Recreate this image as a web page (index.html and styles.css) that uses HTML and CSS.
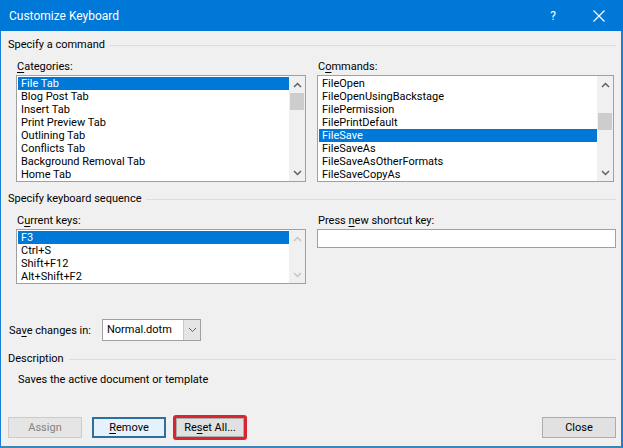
FILE: index.html
```html
<!DOCTYPE html>
<html>
<head>
<meta charset="utf-8">
<link rel="stylesheet" href="styles.css">
</head>
<body>
<div class="window">
  <div class="titlebar">
    <span class="title">Customize Keyboard</span>
    <span class="tb-help">?</span>
    <span class="tb-close">
      <svg width="12" height="12" viewBox="0 0 12 12"><path d="M0.5 0.5L11.5 11.5M11.5 0.5L0.5 11.5" stroke="#fff" stroke-width="1.2" fill="none"/></svg>
    </span>
  </div>
  <div class="content">
    <div class="group-head g1"><span>Specify a command</span></div>
    <div class="two-col">
      <div class="col col-left">
        <div class="label"><u>C</u>ategories:</div>
        <div class="listbox lb-tall">
          <div class="items">
            <div class="item sel">File Tab</div>
            <div class="item">Blog Post Tab</div>
            <div class="item">Insert Tab</div>
            <div class="item">Print Preview Tab</div>
            <div class="item">Outlining Tab</div>
            <div class="item">Conflicts Tab</div>
            <div class="item">Background Removal Tab</div>
            <div class="item">Home Tab</div>
          </div>
          <div class="scrollbar">
            <div class="arrow up"><svg width="9" height="6" viewBox="0 0 9 6"><path d="M1 5L4.5 1.5L8 5" stroke="#606060" stroke-width="1.5" fill="none"/></svg></div>
            <div class="track"><div class="thumb thumb-cat"></div></div>
            <div class="arrow down"><svg width="9" height="6" viewBox="0 0 9 6"><path d="M1 1L4.5 4.5L8 1" stroke="#606060" stroke-width="1.5" fill="none"/></svg></div>
          </div>
        </div>
      </div>
      <div class="col col-right">
        <div class="label">C<u>o</u>mmands:</div>
        <div class="listbox lb-tall">
          <div class="items">
            <div class="item">FileOpen</div>
            <div class="item">FileOpenUsingBackstage</div>
            <div class="item">FilePermission</div>
            <div class="item">FilePrintDefault</div>
            <div class="item sel">FileSave</div>
            <div class="item">FileSaveAs</div>
            <div class="item">FileSaveAsOtherFormats</div>
            <div class="item">FileSaveCopyAs</div>
          </div>
          <div class="scrollbar">
            <div class="arrow up"><svg width="9" height="6" viewBox="0 0 9 6"><path d="M1 5L4.5 1.5L8 5" stroke="#606060" stroke-width="1.5" fill="none"/></svg></div>
            <div class="track"><div class="thumb thumb-cmd"></div></div>
            <div class="arrow down"><svg width="9" height="6" viewBox="0 0 9 6"><path d="M1 1L4.5 4.5L8 1" stroke="#606060" stroke-width="1.5" fill="none"/></svg></div>
          </div>
        </div>
      </div>
    </div>

    <div class="group-head g2"><span>Specify keyboard sequence</span></div>
    <div class="two-col">
      <div class="col col-left">
        <div class="label">C<u>u</u>rrent keys:</div>
        <div class="listbox lb-short">
          <div class="items">
            <div class="item sel">F3</div>
            <div class="item">Ctrl+S</div>
            <div class="item">Shift+F12</div>
            <div class="item">Alt+Shift+F2</div>
          </div>
          <div class="scrollbar">
            <div class="arrow up"><svg width="9" height="6" viewBox="0 0 9 6"><path d="M1 5L4.5 1.5L8 5" stroke="#c5c5c5" stroke-width="1.5" fill="none"/></svg></div>
            <div class="track"></div>
            <div class="arrow down"><svg width="9" height="6" viewBox="0 0 9 6"><path d="M1 1L4.5 4.5L8 1" stroke="#c5c5c5" stroke-width="1.5" fill="none"/></svg></div>
          </div>
        </div>
      </div>
      <div class="col col-right2">
        <div class="label">Press <u>n</u>ew shortcut key:</div>
        <div class="textbox"></div>
      </div>
    </div>

    <div class="save-row">
      <span class="save-label">Sa<u>v</u>e changes in:</span>
      <div class="combo">
        <span class="combo-text">Normal.dotm</span>
        <span class="combo-btn"><svg width="9" height="6" viewBox="0 0 9 6"><path d="M1 1L4.5 4.5L8 1" stroke="#606060" stroke-width="1" fill="none"/></svg></span>
      </div>
    </div>

    <div class="group-head g3"><span>Description</span></div>
    <div class="desc">Saves the active document or template</div>

    <div class="buttons">
      <div class="btn disabled">Assign</div>
      <div class="btn focused"><u>R</u>emove</div>
      <div class="highlight"><div class="btn inner">Re<u>s</u>et All...</div></div>
      <div class="spacer"></div>
      <div class="btn">Close</div>
    </div>
  </div>
</div>
</body>
</html>
```

FILE: styles.css
```css
* { box-sizing: border-box; }
html, body { margin: 0; padding: 0; }
body {
  width: 623px;
  height: 448px;
  overflow: hidden;
  font-family: Roboto, "Noto Sans", sans-serif;
  font-size: 11px;
  color: #000;
  background: #f0f0f0;
}
u { text-decoration: underline; text-underline-offset: 2px; }
.window {
  width: 623px;
  height: 448px;
  border-left: 1px solid #1a7fd4;
  border-right: 2px solid #1a7fd4;
  border-bottom: 2px solid #3f86b8;
  background: #f0f0f0;
  display: flex;
  flex-direction: column;
}
.titlebar {
  height: 31px;
  background: #0078d7;
  color: #fff;
  display: flex;
  align-items: center;
  padding-left: 9px;
  margin-left: -1px;
  margin-right: -2px;
  flex: none;
}
.title { font-size: 12px; flex: 1; }
.tb-help { font-size: 12px; width: 44px; text-align: center; margin-right: 1px; }
.tb-close { width: 46px; display: flex; justify-content: center; align-items: center; margin-right: 1px; }
.content {
  flex: 1;
  padding: 0 0 0 7px;
  display: flex;
  flex-direction: column;
}
.group-head {
  display: flex;
  align-items: center;
  height: 13px;
  line-height: 13px;
  margin-right: 5px;
}
.group-head::after {
  content: "";
  flex: 1;
  height: 1px;
  background: #dcdcdc;
  margin-left: 5px;
  margin-top: 1px;
}
.g1 { margin-top: 7px; }
.g2 { margin-top: 10px; }
.g3 { margin-top: 11px; }
.two-col {
  display: flex;
  padding-left: 8px;
  gap: 11px;
}
.col { display: flex; flex-direction: column; }
.col-left { width: 290px; }
.col-right { width: 297px; }
.col-right2 { width: 299px; }
.label {
  height: 13px;
  line-height: 13px;
  padding-left: 1px;
  margin-top: 9px;
  margin-bottom: 2px;
}
.listbox {
  background: #fff;
  border: 1px solid #a0a0a0;
  display: flex;
  padding: 1px 0 1px 1px;
}
.lb-tall { height: 107px; }
.lb-short { height: 55px; }
.items { flex: 1; display: flex; flex-direction: column; }
.item {
  height: 13px;
  line-height: 13px;
  padding-left: 3px;
  white-space: nowrap;
}
.item.sel { background: #0078d7; color: #fff; }
.scrollbar {
  width: 16px;
  margin-top: -1px;
  margin-bottom: -1px;
  background: #f0f0f0;
  display: flex;
  flex-direction: column;
}
.arrow { height: 17px; display: flex; align-items: center; justify-content: center; flex: none; }
.track { flex: 1; }
.thumb { background: #cdcdcd; height: 17px; margin: 0 1px; }
.thumb-cat { margin-top: 0; }
.thumb-cmd { margin-top: 20px; }
.textbox {
  height: 19px;
  background: #fff;
  border: 1px solid #a0a0a0;
}
.save-row {
  display: flex;
  align-items: center;
  margin-top: 35px;
  height: 22px;
}
.save-label { width: 94px; padding-left: 1px; }
.combo {
  width: 99px;
  height: 22px;
  border: 1px solid #a0a0a0;
  background: #fff;
  display: flex;
}
.combo-text { flex: 1; padding-left: 4px; line-height: 20px; }
.combo-btn {
  width: 17px;
  background: #e5e5e5;
  border-left: 1px solid #c8c8c8;
  display: flex;
  align-items: center;
  justify-content: center;
}
.desc {
  margin-top: 8px;
  padding-left: 10px;
  height: 13px;
  line-height: 13px;
}
.buttons {
  display: flex;
  align-items: center;
  margin-top: 29px;
  padding-right: 5px;
}
.btn {
  width: 74px;
  height: 21px;
  background: #e1e1e1;
  border: 1px solid #adadad;
  display: flex;
  align-items: center;
  justify-content: center;
  flex: none;
}
.btn.disabled { background: #e5e5e5; border-color: #cccccc; color: #838383; }
.btn.focused { margin-left: 10px; background: #e5f1fb; border: 2px solid #2f6f9f; }
.highlight {
  margin-left: 7px;
  border: 3px solid #d92530;
  border-radius: 3px;
  display: flex;
}
.btn.inner { width: 68px; height: 19px; }
.spacer { flex: 1; }
```
